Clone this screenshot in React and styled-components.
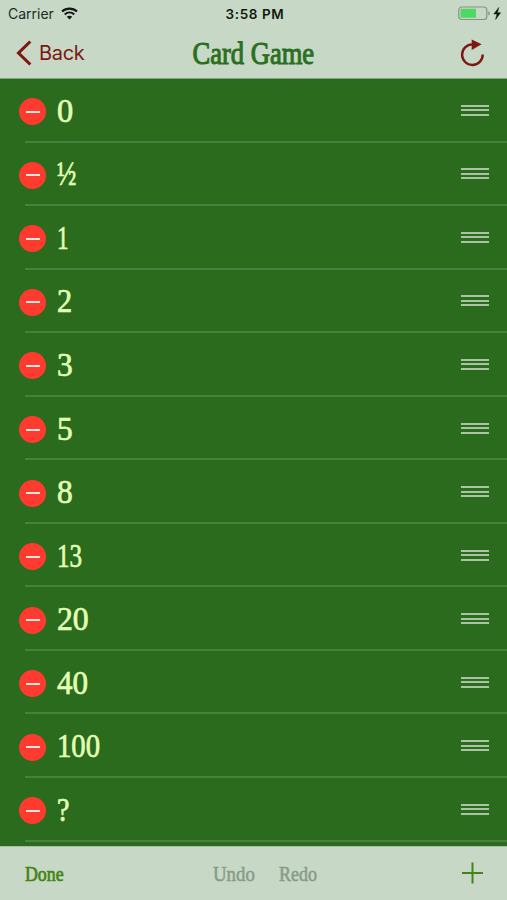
import React from "react";
import styled, { createGlobalStyle } from "styled-components";

const barColor = "#c7d8c7";
const uiFont = `Inter, "Liberation Sans", sans-serif`;
const cardFont = `"Liberation Serif", serif`;

const GlobalStyle = createGlobalStyle`
  * {
    box-sizing: border-box;
  }
  body {
    margin: 0;
    overflow: hidden;
    background-color: #2a6b1e;
  }
`;

const Screen = styled.div`
  width: 507px;
  height: 900px;
  display: flex;
  flex-direction: column;
  overflow: hidden;
  background-color: #2a6b1e;
`;

const Header = styled.header`
  height: 79px;
  flex-shrink: 0;
  background-color: ${barColor};
  border-bottom: 1px solid #7da879;
`;

const StatusBar = styled.div`
  height: 27px;
  display: grid;
  grid-template-columns: 1fr auto 1fr;
  align-items: center;
  padding: 0 5px 0 8px;
  font-family: ${uiFont};
  font-size: 14px;
  color: #202b22;
`;

const Carrier = styled.div`
  display: flex;
  align-items: center;
  gap: 7px;
`;

const Clock = styled.div`
  font-size: 13.5px;
  font-weight: 600;
  letter-spacing: 0.6px;
  color: #111811;
`;

const Battery = styled.div`
  display: flex;
  justify-content: flex-end;
`;

const NavBar = styled.nav`
  height: 51px;
  display: grid;
  grid-template-columns: 1fr auto 1fr;
  align-items: center;
  padding: 0 22px 0 16px;
`;

const BackButton = styled.div`
  display: flex;
  align-items: center;
  gap: 7px;
  font-family: ${uiFont};
  font-size: 20px;
  letter-spacing: -0.3px;
  color: #7d1712;
`;

const Title = styled.div`
  width: 123px;
  margin-left: 6px;
  display: flex;
  justify-content: center;
  font-family: ${cardFont};
  font-size: 32px;
  line-height: 40px;
  white-space: nowrap;
  color: #2a701f;
  -webkit-text-stroke: 1.1px #2a701f;

  span {
    transform: scaleX(0.83);
  }
`;

const Reload = styled.div`
  display: flex;
  justify-content: flex-end;
`;

const List = styled.ul`
  flex: 1;
  min-height: 0;
  margin: 0;
  padding: 0;
  overflow: hidden;
  list-style: none;
`;

const ListItem = styled.li`
  height: 63.55px;
  display: flex;
  flex-direction: column;
`;

const Row = styled.div`
  flex: 1;
  display: flex;
  align-items: center;
  padding: 4px 18px 0 19px;
`;

const Separator = styled.div`
  height: 2px;
  margin-left: 25px;
  background-color: #47813d;
`;

const RemoveButton = styled.div`
  width: 27px;
  height: 27px;
  display: flex;
  align-items: center;
  justify-content: center;
  border-radius: 50%;
  background-color: #ff3b30;

  &::before {
    content: "";
    width: 14px;
    height: 2px;
    background-color: #ffe3df;
  }
`;

const CardName = styled.div`
  flex: 1;
  margin-left: 11px;
  margin-top: -2px;
  font-family: ${cardFont};
  font-size: 33px;
  line-height: 40px;
  color: #e3ffb5;
  -webkit-text-stroke: 0.7px #e3ffb5;
  transform: scaleX(${({ $narrow }) => $narrow});
  transform-origin: left;
`;

const Handle = styled.div`
  width: 28px;
  height: 11px;
  margin-top: -3px;
  display: flex;
  flex-direction: column;
  justify-content: space-between;

  i {
    height: 2px;
    background-color: #aac4a3;
  }
`;

const Toolbar = styled.footer`
  height: 54px;
  flex-shrink: 0;
  display: flex;
  align-items: center;
  padding: 0 24px 0 25px;
  background-color: ${barColor};
  border-top: 1px solid #a3c19f;
`;

const ToolText = styled.div`
  width: ${({ $width }) => $width}px;
  margin-right: ${({ $gap }) => $gap}px;
  font-family: ${cardFont};
  font-size: 20px;
  line-height: 26px;
  white-space: nowrap;
  color: ${({ $muted }) => ($muted ? "#879b87" : "#438413")};
  -webkit-text-stroke: ${({ $muted }) => ($muted ? "0.5px #879b87" : "0.7px #438413")};

  span {
    display: inline-block;
    transform: scaleX(${({ $narrow }) => $narrow});
    transform-origin: left;
  }
`;

const AddButton = styled.div`
  display: flex;
  margin-left: auto;
  margin-bottom: 2px;
`;

const WifiIcon = () => (
  <svg width="17" height="13" viewBox="0 0 17 13" fill="none" stroke="#111811">
    <path d="M1 4.6C5.2.6 11.8.6 16 4.6" strokeWidth="2.1" />
    <path d="M3.7 7.4c2.8-2.5 6.8-2.5 9.6 0" strokeWidth="2" />
    <path d="M8.5 12.6 5.8 9.8c1.5-1.4 3.9-1.4 5.4 0z" fill="#111811" stroke="none" />
  </svg>
);

const BatteryIcon = () => (
  <svg width="44" height="15" viewBox="0 0 44 15">
    <rect x="0.8" y="1" width="28" height="12.5" rx="3" fill="none" stroke="#849384" strokeWidth="1.2" />
    <rect x="2.5" y="2.7" width="15.5" height="9.1" rx="1" fill="#4cd964" />
    <path d="M30.3 5.2c2 .7 2 3.6 0 4.3z" fill="#849384" />
    <path d="M40.8 1.5 35.8 8h3.2l-1.4 5.5 5-6.8h-3.2z" fill="#111811" stroke="#111811" strokeWidth="0.5" />
  </svg>
);

const BackIcon = () => (
  <svg width="16" height="26" viewBox="0 0 16 26">
    <path d="M14.3 1.5 2.5 13l11.8 11.5" fill="none" stroke="#7d1712" strokeWidth="3.1" />
  </svg>
);

const ReloadIcon = () => (
  <svg width="26" height="28" viewBox="0 0 26 28">
    <path d="M23.7 15.6A10.3 10.3 0 1 1 13.4 5.4" fill="none" stroke="#7d1712" strokeWidth="2.4" />
    <path d="M12.7.4 22.6 5.2 12.7 11z" fill="#7d1712" />
  </svg>
);

const PlusIcon = () => (
  <svg width="21" height="22" viewBox="0 0 21 22">
    <path d="M10.5 0.5v21M0 11h21" stroke="#438413" strokeWidth="2" />
  </svg>
);

const cards = [
  { name: "0", narrow: 0.98 },
  { name: "½", narrow: 0.78 },
  { name: "1", narrow: 0.7 },
  { name: "2", narrow: 0.92 },
  { name: "3", narrow: 0.95 },
  { name: "5", narrow: 0.95 },
  { name: "8", narrow: 0.95 },
  { name: "13", narrow: 0.76 },
  { name: "20", narrow: 0.96 },
  { name: "40", narrow: 0.94 },
  { name: "100", narrow: 0.87 },
  { name: "?", narrow: 0.85 },
];

const card = ({ name, narrow }) => (
  <ListItem key={`card-${name}`}>
    <Row>
      <RemoveButton />
      <CardName $narrow={narrow}>{name}</CardName>
      <Handle>
        <i />
        <i />
        <i />
      </Handle>
    </Row>
    <Separator />
  </ListItem>
);

const App = () => (
  <>
    <GlobalStyle />
    <Screen>
      <Header>
        <StatusBar>
          <Carrier>
            Carrier
            <WifiIcon />
          </Carrier>
          <Clock>3:58 PM</Clock>
          <Battery>
            <BatteryIcon />
          </Battery>
        </StatusBar>
        <NavBar>
          <BackButton>
            <BackIcon />
            Back
          </BackButton>
          <Title>
            <span>Card Game</span>
          </Title>
          <Reload>
            <ReloadIcon />
          </Reload>
        </NavBar>
      </Header>
      <List>{cards.map(card)}</List>
      <Toolbar>
        <ToolText $width={39} $gap={149} $narrow={0.89}>
          <span>Done</span>
        </ToolText>
        <ToolText $width={42} $gap={24} $narrow={0.94} $muted>
          <span>Undo</span>
        </ToolText>
        <ToolText $width={38} $gap={0} $narrow={0.9} $muted>
          <span>Redo</span>
        </ToolText>
        <AddButton>
          <PlusIcon />
        </AddButton>
      </Toolbar>
    </Screen>
  </>
);

export default App;
